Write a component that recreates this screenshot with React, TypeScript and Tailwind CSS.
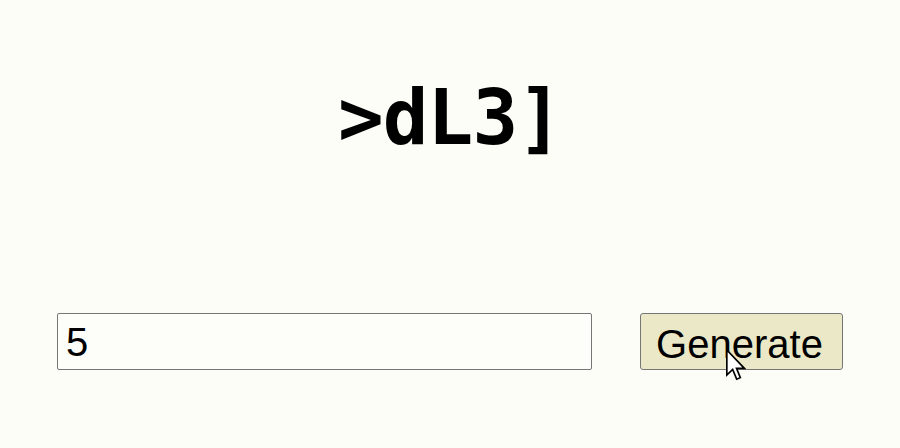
import React from 'react';

function Cursor() {
  return (
    <svg
      className="absolute left-[726px] top-[349px]"
      width="20"
      height="32"
      viewBox="0 0 12 19"
    >
      <path
        d="M0.5 0.5 L0.5 15.5 L4 12.2 L6.4 18 L8.6 17.1 L6.3 11.5 L11 11.5 Z"
        fill="#ffffff"
        stroke="#000000"
        strokeWidth="1"
        strokeLinejoin="miter"
      />
    </svg>
  );
}

export default function App() {
  return (
    <div className="relative w-[900px] h-[448px] bg-[#fdfdf8] overflow-hidden">
      <div className="flex flex-col items-center pt-[80px]">
        <h1
          className="text-[76px] leading-none font-bold text-black tracking-[-1px]"
          style={{ fontFamily: '"DejaVu Sans Mono", monospace' }}
        >
          &gt;dL3]
        </h1>
      </div>

      <div className="flex items-center gap-[48px] px-[57px] mt-[157px]">
        <input
          defaultValue="5"
          className="flex-1 h-[57px] bg-[#fdfdfa] border border-[#767676] rounded-[2px] px-[8px] text-[40px] text-black outline-none"
          style={{ fontFamily: '"Liberation Sans", Arial, sans-serif' }}
        />
        <button
          className="h-[57px] w-[203px] bg-[#eae8c6] border border-[#767676] rounded-[3px] pr-[4px] text-[40px] text-black"
          style={{ fontFamily: '"Liberation Sans", Arial, sans-serif' }}
        >
          Generate
        </button>
      </div>

      <Cursor />
    </div>
  );
}
